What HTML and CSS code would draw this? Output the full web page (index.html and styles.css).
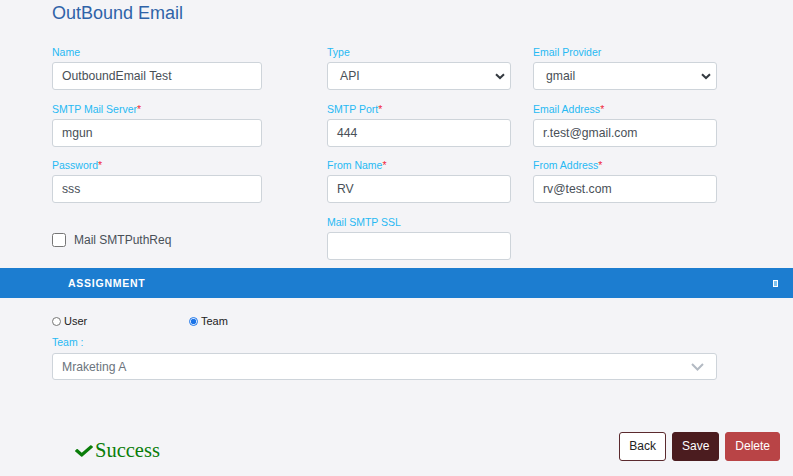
FILE: index.html
```html
<!DOCTYPE html>
<html>
<head>
<meta charset="utf-8">
<link rel="stylesheet" href="styles.css">
</head>
<body>
<div class="page">
  <h1 class="title">OutBound Email</h1>
  <div class="form-grid">
    <div class="field w1"><div class="lbl">Name</div><div class="input">OutboundEmail Test</div></div>
    <div class="field"><div class="lbl">Type</div><div class="select">API<svg class="chev" width="10" height="7" viewBox="0 0 10 7"><path d="M1 1.2 L5 5 L9 1.2" fill="none" stroke="#343a40" stroke-width="2"/></svg></div></div>
    <div class="field"><div class="lbl">Email Provider</div><div class="select">gmail<svg class="chev" width="10" height="7" viewBox="0 0 10 7"><path d="M1 1.2 L5 5 L9 1.2" fill="none" stroke="#343a40" stroke-width="2"/></svg></div></div>

    <div class="field w1"><div class="lbl">SMTP Mail Server<span class="req">*</span></div><div class="input">mgun</div></div>
    <div class="field"><div class="lbl">SMTP Port<span class="req">*</span></div><div class="input">444</div></div>
    <div class="field"><div class="lbl">Email Address<span class="req">*</span></div><div class="input">r.test@gmail.com</div></div>

    <div class="field w1"><div class="lbl">Password<span class="req">*</span></div><div class="input">sss</div></div>
    <div class="field"><div class="lbl">From Name<span class="req">*</span></div><div class="input">RV</div></div>
    <div class="field"><div class="lbl">From Address<span class="req">*</span></div><div class="input">rv@test.com</div></div>

    <div class="field w1"><label class="check"><input type="checkbox"><span>Mail SMTPuthReq</span></label></div>
    <div class="field"><div class="lbl">Mail SMTP SSL</div><div class="input"></div></div>
    <div class="field"></div>
  </div>
</div>

<div class="bar">
  <span class="bar-title">ASSIGNMENT</span>
  <span class="bar-icon"></span>
</div>

<div class="assign">
  <div class="radios">
    <label class="radio r1"><input type="radio" name="a"><span>User</span></label>
    <label class="radio"><input type="radio" name="a" checked><span>Team</span></label>
  </div>
  <div class="lbl">Team :</div>
  <div class="select team">Mraketing A<svg class="chev" width="13" height="8" viewBox="0 0 13 8"><path d="M1 1 L6.5 6.5 L12 1" fill="none" stroke="#b3bac3" stroke-width="2"/></svg></div>
</div>

<div class="footer">
  <div class="success">
    <svg class="tick" width="18" height="12" viewBox="0 60 512 392" preserveAspectRatio="none"><path fill="#0a7d0a" d="M173.898 439.404l-166.4-166.4c-9.997-9.997-9.997-26.206 0-36.204l36.203-36.204c9.997-9.998 26.207-9.998 36.204 0L192 312.69 432.095 72.596c9.997-9.997 26.207-9.997 36.204 0l36.203 36.204c9.997 9.997 9.997 26.206 0 36.204l-294.4 294.401c-9.998 9.997-26.207 9.997-36.204-.001z"/></svg>
    <span>Success</span>
  </div>
  <div class="buttons">
    <button class="btn back">Back</button>
    <button class="btn save">Save</button>
    <button class="btn delete">Delete</button>
  </div>
</div>
</body>
</html>
```
FILE: styles.css
```css
* { box-sizing: border-box; }
html, body { margin: 0; padding: 0; }
body {
  background: #f4f4f7;
  font-family: "Liberation Sans", Arial, sans-serif;
  width: 793px;
  height: 476px;
  overflow: hidden;
}
.page { padding: 2px 0 0 52px; }
.title {
  margin: 0;
  font-size: 18px;
  line-height: 22px;
  font-weight: normal;
  color: #2f63a8;
}
.form-grid {
  margin-top: 21px;
  display: grid;
  grid-template-columns: 275px 206px 184px;
  row-gap: 11.5px;
}
.field { display: flex; flex-direction: column; width: 184px; }
.field.w1 { width: 210px; }
.lbl {
  font-size: 10.5px;
  line-height: 14px;
  color: #27b9f3;
  margin-bottom: 3px;
}
.req { color: #f0283c; }
.input, .select {
  height: 28px;
  background: #fff;
  border: 1px solid #ced4da;
  border-radius: 3px;
  font-size: 12.2px;
  color: #495057;
  display: flex;
  align-items: center;
  padding: 0 9px;
}
.select { padding: 0 5px 0 12px; justify-content: space-between; }
.check {
  margin-top: 18px;
  display: flex;
  align-items: center;
  font-size: 12px;
  color: #495057;
}
.check input {
  width: 14px;
  height: 14px;
  margin: 0 8px 0 0;
}
.bar {
  margin-top: 8.5px;
  height: 30px;
  background: #1c7dd0;
  display: flex;
  align-items: center;
  justify-content: space-between;
  padding: 0 15px 0 68px;
}
.bar-title {
  color: #fff;
  font-weight: bold;
  font-size: 10.5px;
  letter-spacing: 0.75px;
}
.bar-icon {
  width: 5px;
  height: 7px;
  border: 1px solid #fff;
  background: #7fc3f0;
}
.assign { padding: 16px 76px 0 52px; }
.radios {
  display: flex;
  height: 14px;
  align-items: center;
  margin-bottom: 7px;
}
.radio {
  display: flex;
  align-items: center;
  font-size: 11px;
  color: #222;
}
.radio.r1 { width: 137px; }
.radio input {
  width: 9px;
  height: 9px;
  margin: 0 3px 0 0;
  accent-color: #1a73e8;
}
.assign .lbl { margin-bottom: 4px; }
.select.team {
  height: 27px;
  padding: 0 12px 0 9px;
  color: #6c757d;
}
.footer {
  margin-top: 50px;
  display: flex;
  align-items: center;
  justify-content: space-between;
  padding: 0 13px 0 75px;
}
.success {
  display: flex;
  align-items: center;
  font-family: "Liberation Serif", "Times New Roman", serif;
  font-size: 20.5px;
  color: #0a7d0a;
  margin-top: 9px;
}
.tick { margin-right: 2px; }
.buttons { display: flex; gap: 6px; }
.btn {
  height: 29px;
  border-radius: 3px;
  font-family: "Liberation Sans", Arial, sans-serif;
  font-size: 12px;
  padding: 0 9px;
  border: 1px solid transparent;
}
.back { background: #fff; border-color: #5b2a2e; color: #222; }
.save { background: #4b1c1f; color: #fff; border-color: #4b1c1f; }
.delete { background: #b94446; color: #fff; border-color: #b94446; }
```
